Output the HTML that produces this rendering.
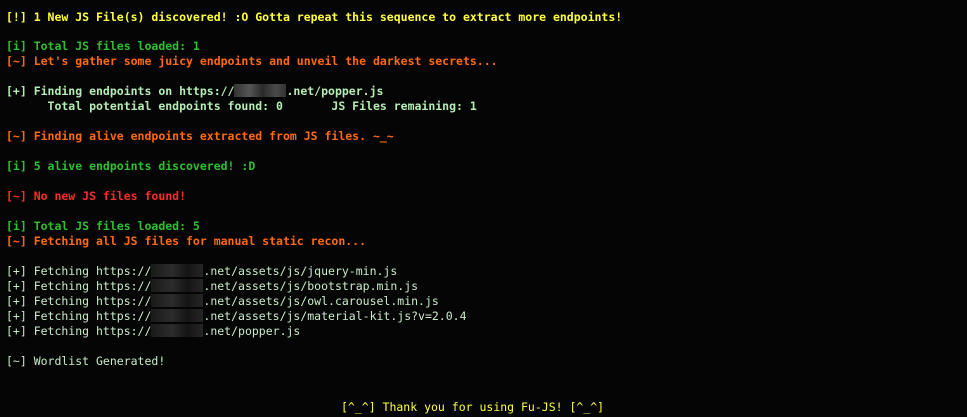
<!DOCTYPE html><html><head><style>
body{margin:0;background:#050505;width:967px;height:417px;overflow:hidden;position:relative;font-family:"DejaVu Sans Mono","Liberation Mono",monospace;font-size:11.5px;}
.l{position:absolute;left:6px;white-space:pre;line-height:15px;}
.y{color:#ffff3c;font-weight:bold}.g{color:#2ec02e;font-weight:bold}.o{color:#ff6a10;font-weight:bold}.r{color:#ff2a2a;font-weight:bold}
.w{color:#c8ecc8}.wb{color:#b4ecb4;font-weight:bold}
.b{display:inline-block;background:linear-gradient(90deg,#333 0,#555 30%,#2a2a2a 55%,#4a4a4a 80%,#333);height:13px;vertical-align:-2px;}
.f .b{background:linear-gradient(90deg,#1a1a1a,#2c2c2c 40%,#151515 70%,#262626)}
</style></head><body>
<div class="l y" style="top:10px">[!] 1 New JS File(s) discovered! :O Gotta repeat this sequence to extract more endpoints!</div>
<div class="l g" style="top:39px">[i] Total JS files loaded: 1</div>
<div class="l o" style="top:54px">[~] Let's gather some juicy endpoints and unveil the darkest secrets...</div>
<div class="l wb" style="top:84px">[+] Finding endpoints on https://<span class="b" style="width:52px"></span>.net/popper.js</div>
<div class="l wb" style="top:99px">      Total potential endpoints found: 0       JS Files remaining: 1</div>
<div class="l o" style="top:129px">[~] Finding alive endpoints extracted from JS files. ~_~</div>
<div class="l g" style="top:159px">[i] 5 alive endpoints discovered! :D</div>
<div class="l r" style="top:189px">[~] No new JS files found!</div>
<div class="l g" style="top:219px">[i] Total JS files loaded: 5</div>
<div class="l o" style="top:234px">[~] Fetching all JS files for manual static recon...</div>
<div class="l w f" style="top:264px">[+] Fetching https://<span class="b" style="width:52px"></span>.net/assets/js/jquery-min.js</div>
<div class="l w f" style="top:279px">[+] Fetching https://<span class="b" style="width:52px"></span>.net/assets/js/bootstrap.min.js</div>
<div class="l w f" style="top:294px">[+] Fetching https://<span class="b" style="width:52px"></span>.net/assets/js/owl.carousel.min.js</div>
<div class="l w f" style="top:309px">[+] Fetching https://<span class="b" style="width:52px"></span>.net/assets/js/material-kit.js?v=2.0.4</div>
<div class="l w f" style="top:324px">[+] Fetching https://<span class="b" style="width:52px"></span>.net/popper.js</div>
<div class="l w" style="top:354px">[~] Wordlist Generated!</div>
<div class="l" style="top:400px;left:341px;color:#ffff3c">[^_^] Thank you for using Fu-JS! [^_^]</div>
</body></html>
